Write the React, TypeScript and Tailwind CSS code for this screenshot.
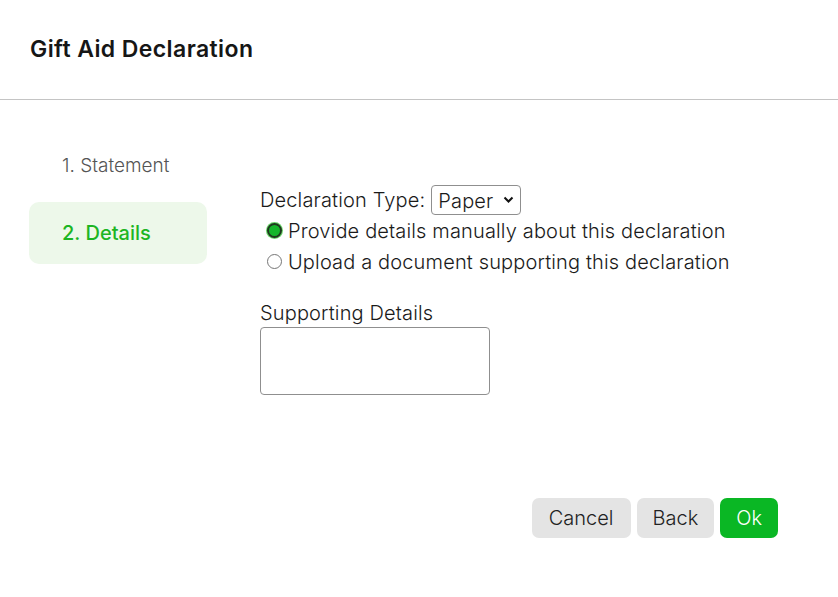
import React from 'react';

const font = { fontFamily: 'Inter, "Noto Sans", sans-serif' };

const Radio = ({ checked, label }: { checked?: boolean; label: string }) => (
  <label className="flex items-center h-[31px]">
    {checked ? (
      <span className="ml-[7px] mr-[6px] w-[15px] h-[15px] rounded-full bg-[#14b62a] border-2 border-[#1e3a1e] shadow-[0_0_0_1px_#6ad46a]" />
    ) : (
      <span className="ml-[7px] mr-[6px] w-[15px] h-[15px] rounded-full bg-white border border-[#767676]" />
    )}
    <span>{label}</span>
  </label>
);

const App = () => {
  const [type, setType] = React.useState('Paper');

  return (
    <div className="w-[838px] h-[597px] bg-white text-[#1a1a1a] flex flex-col" style={font}>
      <header className="h-[100px] border-b border-[#c4c4c4] flex items-center px-[30px]">
        <h1 className="text-[23px] font-semibold tracking-[0.4px] text-[#161616]">Gift Aid Declaration</h1>
      </header>

      <main className="flex flex-1 pt-[48px]">
        {/* Steps */}
        <nav className="w-[178px] ml-[29px] flex flex-col">
          <div className="h-[36px] mb-[18px] flex items-center pl-[33px] text-[19px] font-light text-[#555]">1. Statement</div>
          <div className="h-[62px] flex items-center pl-[33px] rounded-[10px] bg-[#edf8ea] text-[20px] font-medium text-[#1db523]">
            2. Details
          </div>
        </nav>

        {/* Form */}
        <section className="ml-[53px] pt-[37px] text-[20px] font-light tracking-[0.15px]">
          <div className="flex items-center h-[30px]">
            <span className="mr-[6px]">Declaration Type:</span>
            <div className="relative">
              <select
                value={type}
                onChange={(e) => setType(e.target.value)}
                className="appearance-none h-[30px] w-[90px] pl-[6px] pr-[20px] border border-[#8f8f8f] rounded-[4px] bg-white text-[20px] font-light"
                style={font}
              >
                <option>Paper</option>
                <option>Electronic</option>
                <option>Oral</option>
              </select>
              <svg className="absolute right-[7px] top-[11px] pointer-events-none" width="11" height="8" viewBox="0 0 11 8">
                <path d="M1.5 1.5 L5.5 5.5 L9.5 1.5" fill="none" stroke="#111" strokeWidth="2" />
              </svg>
            </div>
          </div>
          <Radio checked label="Provide details manually about this declaration" />
          <Radio label="Upload a document supporting this declaration" />

          <div className="mt-[22px] h-[28px] flex items-center">Supporting Details</div>
          <textarea className="block w-[230px] h-[68px] border border-[#8f8f8f] rounded-[4px] resize-none" />
        </section>
      </main>

      <footer className="flex justify-end gap-[6px] pr-[60px] pb-[59px] text-[20px] font-light">
        <button className="h-[40px] px-[17px] rounded-[7px] bg-[#e4e4e4] text-[#222]">Cancel</button>
        <button className="h-[40px] px-[16px] rounded-[7px] bg-[#e4e4e4] text-[#222]">Back</button>
        <button className="h-[40px] px-[16px] rounded-[7px] bg-[#0ab724] text-white">Ok</button>
      </footer>
    </div>
  );
};

export default App;
